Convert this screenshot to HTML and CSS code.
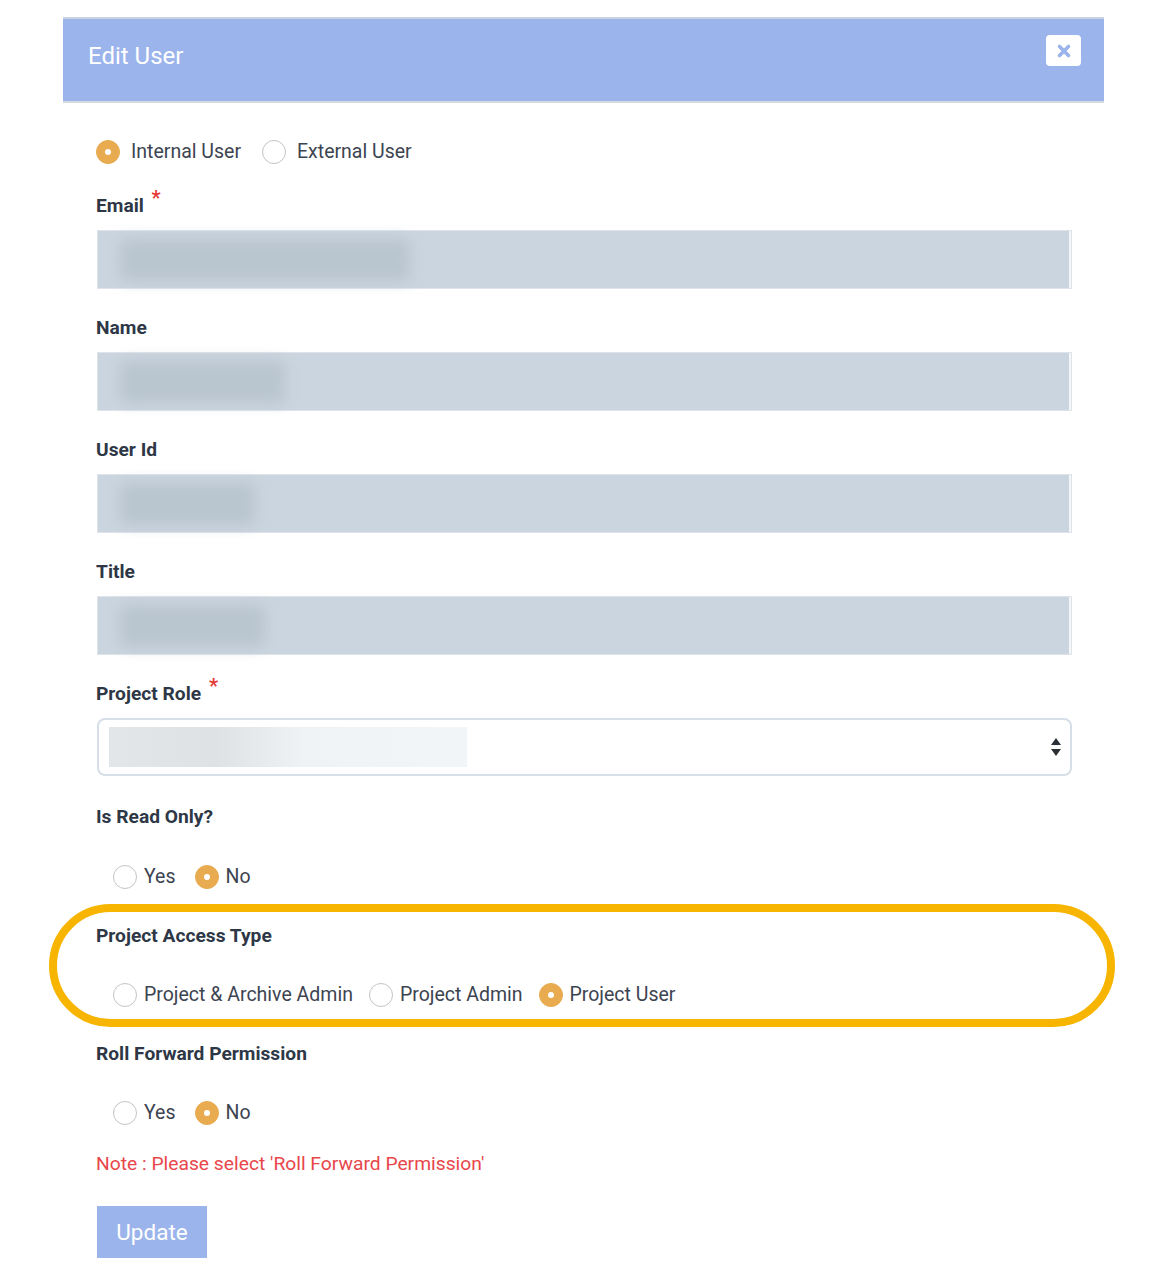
FILE: index.html
```html
<!DOCTYPE html>
<html>
<head>
<meta charset="utf-8">
<link rel="stylesheet" href="styles.css">
</head>
<body>
<div class="modal">
  <div class="modal-header">
    <h1 class="modal-title">Edit User</h1>
    <button class="close-btn" aria-label="Close">
      <svg width="16" height="16" viewBox="0 0 16 16"><path d="M3.5 3.5 L12.5 12.5 M12.5 3.5 L3.5 12.5" stroke="#9bb4eb" stroke-width="3.6" stroke-linecap="round"/></svg>
    </button>
  </div>
  <div class="modal-body">
    <div class="radio-row top-row">
      <label class="opt"><span class="radio checked"></span><span>Internal User</span></label>
      <label class="opt"><span class="radio"></span><span>External User</span></label>
    </div>

    <div class="field first">
      <div class="label">Email <span class="req">*</span></div>
      <div class="input"><span class="blob" style="width:290px"></span></div>
    </div>
    <div class="field">
      <div class="label">Name</div>
      <div class="input"><span class="blob" style="width:165px"></span></div>
    </div>
    <div class="field">
      <div class="label">User Id</div>
      <div class="input"><span class="blob" style="width:135px"></span></div>
    </div>
    <div class="field">
      <div class="label">Title</div>
      <div class="input"><span class="blob" style="width:145px"></span></div>
    </div>
    <div class="field">
      <div class="label">Project Role <span class="req">*</span></div>
      <div class="select">
        <span class="select-blob"></span>
        <svg class="arrows" width="12" height="20" viewBox="0 0 12 20"><path d="M6 1 L11 8 L1 8 Z M1 12 L11 12 L6 19 Z" fill="#2b2f36"/></svg>
      </div>
    </div>

    <div class="section">
      <div class="label">Is Read Only?</div>
      <div class="radio-row sub yesno">
        <label class="opt"><span class="radio"></span><span>Yes</span></label>
        <label class="opt"><span class="radio checked"></span><span>No</span></label>
      </div>
    </div>

    <div class="section highlight">
      <div class="label">Project Access Type</div>
      <div class="radio-row sub">
        <label class="opt"><span class="radio"></span><span>Project &amp; Archive Admin</span></label>
        <label class="opt"><span class="radio"></span><span>Project Admin</span></label>
        <label class="opt"><span class="radio checked"></span><span>Project User</span></label>
      </div>
    </div>

    <div class="section">
      <div class="label">Roll Forward Permission</div>
      <div class="radio-row sub yesno">
        <label class="opt"><span class="radio"></span><span>Yes</span></label>
        <label class="opt"><span class="radio checked"></span><span>No</span></label>
      </div>
    </div>

    <p class="note">Note : Please select 'Roll Forward Permission'</p>
    <button class="update">Update</button>
  </div>
</div>
</body>
</html>
```

FILE: styles.css
```css
* { box-sizing: border-box; }
html, body { margin: 0; padding: 0; background: #fff; }
body {
  font-family: Roboto, "Liberation Sans", Arial, sans-serif;
  color: #3b4350;
  width: 1168px;
  height: 1276px;
  overflow: hidden;
}
.modal {
  margin: 17px 0 0 63px;
  width: 1041px;
}
.modal-header {
  height: 86px;
  background: #9bb4eb;
  border-top: 2px solid #c9d2de;
  border-bottom: 2px solid #d5dae2;
  display: flex;
  align-items: flex-start;
  justify-content: space-between;
  padding: 0 23px 0 25px;
}
.modal-title {
  margin: 0;
  padding-top: 22px;
  font-size: 24px;
  line-height: 30px;
  font-weight: 400;
  color: #fff;
}
.close-btn {
  margin-top: 16px;
  width: 35px;
  height: 31px;
  border: none;
  border-radius: 4px;
  background: #fff;
  display: flex;
  align-items: center;
  justify-content: center;
  padding: 0;
}
.modal-body {
  padding: 37px 32px 0 34px;
}
.radio-row {
  display: flex;
  align-items: center;
  height: 24px;
}
.opt {
  display: flex;
  align-items: center;
  font-size: 19.5px;
  line-height: 24px;
  color: #3d4451;
}
.top-row { margin-left: -1px; }
.top-row .opt { gap: 11px; margin-right: 21px; }
.sub { padding-left: 16px; margin-top: 36px; }
.sub .opt { gap: 7px; margin-right: 16px; }
.sub.yesno .opt { gap: 7px; margin-right: 19px; }
.radio {
  width: 24px;
  height: 24px;
  border-radius: 50%;
  border: 1.5px solid #c4c4c4;
  background: #fff;
  flex: none;
  position: relative;
}
.radio.checked {
  background: #e8ab4f;
  border-color: #e8ab4f;
}
.radio.checked::after {
  content: "";
  position: absolute;
  left: 50%;
  top: 50%;
  width: 6px;
  height: 6px;
  margin: -3px 0 0 -3px;
  border-radius: 50%;
  background: #fff;
}
.label {
  font-size: 19.2px;
  line-height: 24px;
  height: 24px;
  font-weight: 700;
  color: #2e3746;
  margin-left: -1px;
}
.req {
  color: #e53935;
  font-size: 20px;
  line-height: 0;
  position: relative;
  top: -7px;
  margin-left: 3px;
}
.field { margin-top: 27px; }
.field.first { margin-top: 30px; }
.field .label { margin-bottom: 12px; }
.input {
  height: 59px;
  background: #cbd5df;
  border: 1px solid #dfe4ea;
  box-shadow: inset -2px 0 0 #f4f6f8;
  padding: 8px 22px;
}
.blob {
  display: block;
  height: 42px;
  background: #b9c5cf;
  filter: blur(7px);
  border-radius: 6px;
}
.select {
  height: 58px;
  margin-top: 1px;
  background: #fff;
  border: 2px solid #d6dee8;
  border-radius: 8px;
  display: flex;
  align-items: center;
  justify-content: space-between;
  padding: 0 8px 0 10px;
}
.select-blob {
  display: block;
  width: 358px;
  height: 40px;
  background: linear-gradient(90deg, #e3e6e9 0%, #dfe2e5 30%, #f0f3f6 55%, #f2f5f8 100%);
}
.section { margin-top: 29px; }
.section + .section { margin-top: 35px; }
.highlight { position: relative; }
.highlight::before {
  content: "";
  position: absolute;
  left: -48px;
  right: -43px;
  top: -20px;
  bottom: -20px;
  border: 8px solid #f7b500;
  border-radius: 62px;
  pointer-events: none;
}
.section + .section .sub { margin-top: 35px; }
.note {
  margin: 27px 0 0 -1px;
  font-size: 19.25px;
  line-height: 24px;
  color: #e8464a;
}
.update {
  margin-top: 30px;
  width: 110px;
  height: 52px;
  border: none;
  background: #9bb4eb;
  color: #fff;
  font-family: Roboto, "Liberation Sans", Arial, sans-serif;
  font-size: 22.5px;
  padding: 0;
}
```
